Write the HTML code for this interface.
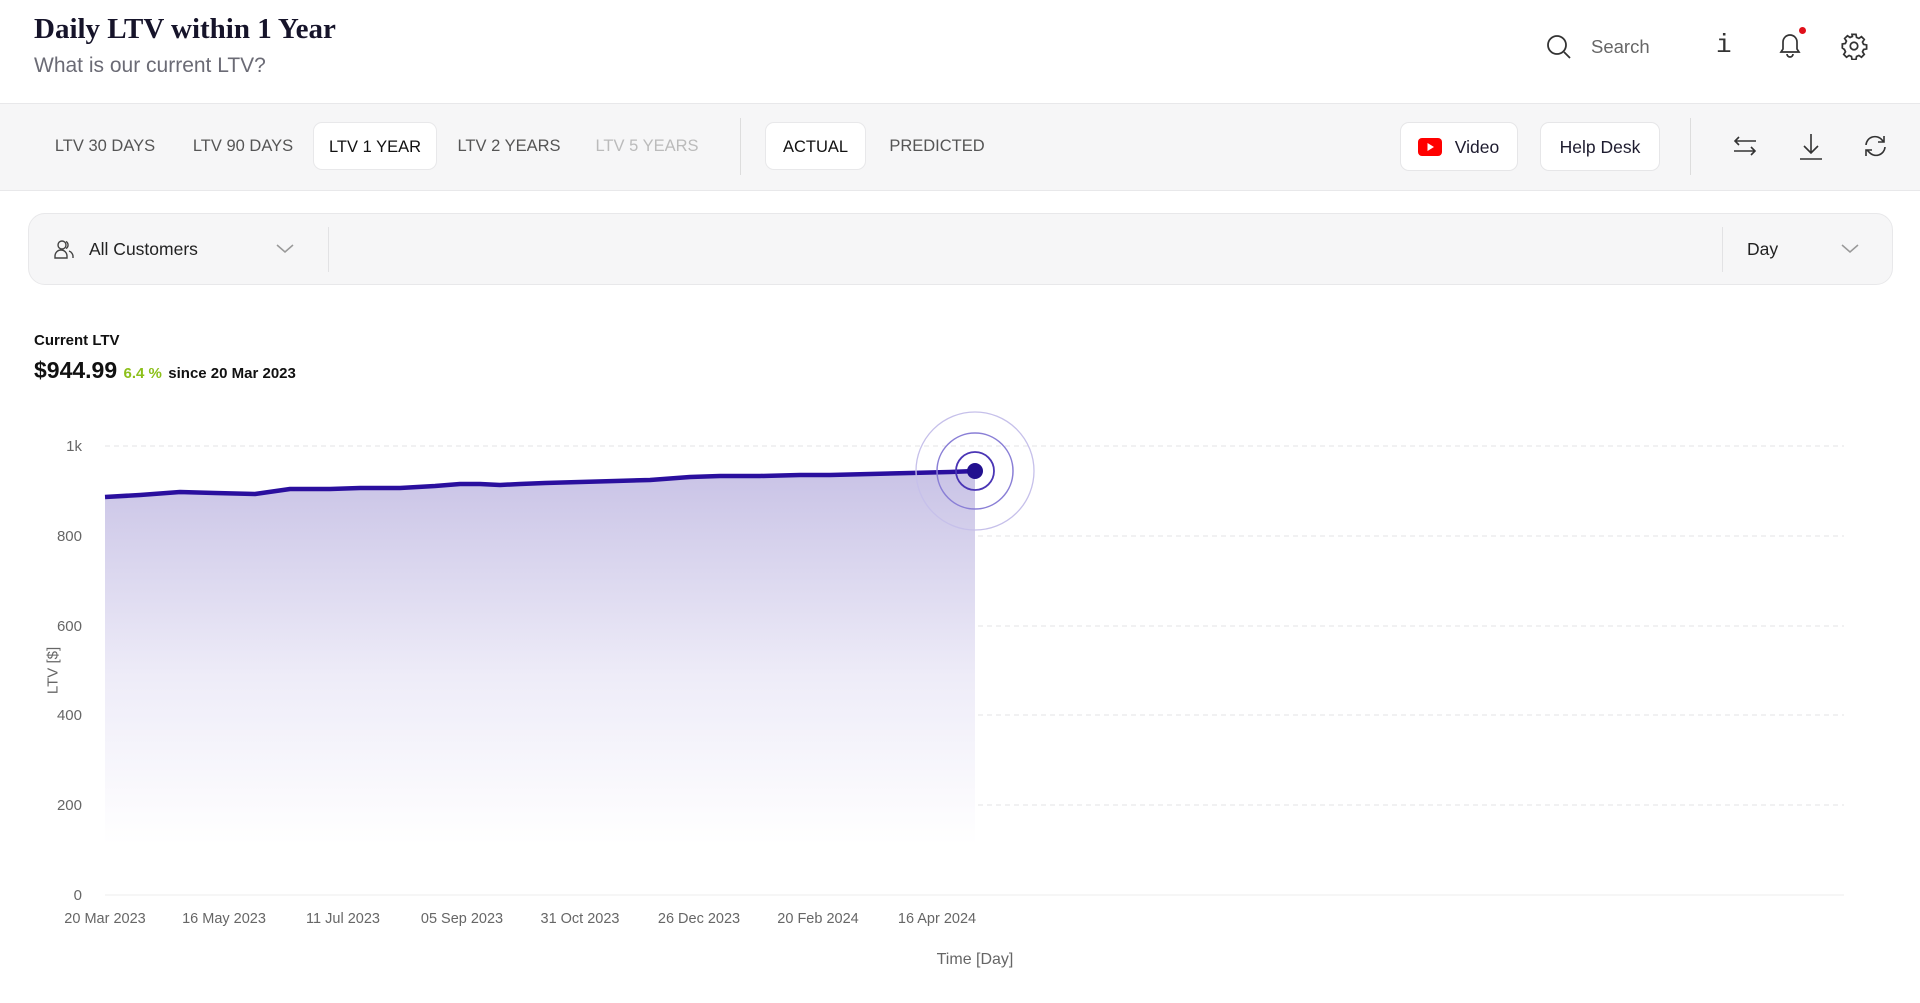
<!DOCTYPE html>
<html><head><meta charset="utf-8"><style>
*{margin:0;padding:0;box-sizing:border-box}
body{width:1920px;height:1003px;background:#fff;font-family:"Liberation Sans",sans-serif;color:#1d1b2e;position:relative;overflow:hidden}
.a{position:absolute;white-space:nowrap}
.tab{position:absolute;top:122px;height:48px;line-height:49px;font-size:16.5px;color:#555;text-align:center}
.btn{position:absolute;top:122px;height:49px;background:#fff;border:1px solid #e6e6e8;border-radius:9px;font-size:17.5px;line-height:48px;color:#1d1b2e;text-align:center}
.yl{position:absolute;right:1838px;font-size:15px;color:#666;text-align:right}
.xl{position:absolute;top:911px;font-size:14.5px;color:#666;transform:translateX(-50%);white-space:nowrap}
</style></head><body>
<div class="a" style="left:34px;top:13px;font-family:'Liberation Serif',serif;font-weight:bold;font-size:29px;color:#16142a">Daily LTV within 1 Year</div>
<div class="a" style="left:34px;top:54px;font-size:21px;color:#6b6b75">What is our current LTV?</div>
<svg class="a" style="left:1545px;top:33px" width="28" height="28" viewBox="0 0 28 28" fill="none" stroke="#333" stroke-width="1.8"><circle cx="12" cy="12" r="9"/><path d="M19 19l6 6"/></svg>
<div class="a" style="left:1591px;top:36px;font-size:18.5px;color:#666">Search</div>
<div class="a" style="left:1716px;top:30px;font-family:'Liberation Mono',monospace;font-size:26px;color:#333">i</div>
<svg class="a" style="left:1775px;top:30px" width="30" height="30" viewBox="0 0 30 30" fill="none" stroke="#333" stroke-width="1.7"><path d="M6 22h18l-2-3v-7a7 7 0 0 0-14 0v7z"/><path d="M12 24a3 3 0 0 0 6 0"/></svg>
<div class="a" style="left:1799px;top:27px;width:7px;height:7px;border-radius:50%;background:#e0101a"></div>
<svg class="a" style="left:1840px;top:32px" width="28" height="28" viewBox="0 0 24 24" fill="none" stroke="#333" stroke-width="1.5"><circle cx="12" cy="12" r="3.2"/><path d="M10.3 2h3.4l.5 2.6 2 .9 2.2-1.5 2.4 2.4-1.5 2.2.9 2 2.6.5v3.4l-2.6.5-.9 2 1.5 2.2-2.4 2.4-2.2-1.5-2 .9-.5 2.6h-3.4l-.5-2.6-2-.9-2.2 1.5-2.4-2.4 1.5-2.2-.9-2L2 13.7v-3.4l2.6-.5.9-2L4 5.6 6.4 3.2l2.2 1.5 2-.9z"/></svg>

<div class="a" style="left:0;top:103px;width:1920px;height:88px;background:#f6f6f7;border-top:1px solid #e8e8ea;border-bottom:1px solid #e8e8ea"></div>
<div class="tab" style="left:45px;width:120px">LTV 30 DAYS</div>
<div class="tab" style="left:183px;width:120px">LTV 90 DAYS</div>
<div class="tab" style="left:313px;width:124px;background:#fff;border:1px solid #e8e8ea;border-radius:9px;color:#111">LTV 1 YEAR</div>
<div class="tab" style="left:449px;width:120px">LTV 2 YEARS</div>
<div class="tab" style="left:587px;width:120px;color:#bbb">LTV 5 YEARS</div>
<div class="a" style="left:740px;top:118px;width:1px;height:57px;background:#ddd"></div>
<div class="tab" style="left:765px;width:101px;background:#fff;border:1px solid #e8e8ea;border-radius:9px;color:#111">ACTUAL</div>
<div class="tab" style="left:882px;width:110px">PREDICTED</div>
<div class="btn" style="left:1400px;width:118px"><svg style="position:absolute;left:17px;top:15px" width="24" height="18" viewBox="0 0 24 18"><rect width="24" height="18" rx="4" fill="#f00"/><path d="M9.5 5v8l6.5-4z" fill="#fff"/></svg><span style="margin-left:36px">Video</span></div>
<div class="btn" style="left:1540px;width:120px">Help Desk</div>
<div class="a" style="left:1690px;top:118px;width:1px;height:57px;background:#ddd"></div>
<svg class="a" style="left:1731px;top:132px" width="28" height="28" viewBox="0 0 28 28" fill="none" stroke="#333" stroke-width="1.6"><path d="M25 9H4M8 5L4 9l4 4M3 19h21M20 15l4 4-4 4"/></svg>
<svg class="a" style="left:1797px;top:131px" width="28" height="30" viewBox="0 0 28 30" fill="none" stroke="#333" stroke-width="1.6"><path d="M14 3v19M7 15l7 7 7-7M3 28h22"/></svg>
<svg class="a" style="left:1861px;top:132px" width="28" height="28" viewBox="0 0 28 28" fill="none" stroke="#333" stroke-width="1.6"><path d="M5 13a9 9 0 0 1 16-5l2 2M24 15a9 9 0 0 1-16 5l-2-2"/><path d="M23 4v6h-6M5 24v-6h6"/></svg>

<div class="a" style="left:28px;top:213px;width:1865px;height:72px;background:#f6f6f7;border:1px solid #e8e8ea;border-radius:17px"></div>
<svg class="a" style="left:53px;top:238px" width="22" height="22" viewBox="0 0 22 22" fill="none" stroke="#444" stroke-width="1.4"><circle cx="9" cy="7" r="4"/><path d="M2 20v-2a6 6 0 0 1 12 0v2zM13 3.5a4 4 0 0 1 0 7M16 13a6 6 0 0 1 4 6v1"/></svg>
<div class="a" style="left:89px;top:239px;font-size:17.5px;color:#222">All Customers</div>
<svg class="a" style="left:276px;top:244px" width="18" height="10" viewBox="0 0 18 10" fill="none" stroke="#999" stroke-width="1.5"><path d="M1 1l8 7 8-7"/></svg>
<div class="a" style="left:328px;top:227px;width:1px;height:45px;background:#e2e2e4"></div>
<div class="a" style="left:1722px;top:227px;width:1px;height:45px;background:#e2e2e4"></div>
<div class="a" style="left:1747px;top:239px;font-size:17.5px;color:#222">Day</div>
<svg class="a" style="left:1841px;top:244px" width="18" height="10" viewBox="0 0 18 10" fill="none" stroke="#999" stroke-width="1.5"><path d="M1 1l8 7 8-7"/></svg>

<div class="a" style="left:34px;top:332px;font-size:15px;font-weight:bold;color:#111">Current LTV</div>
<div class="a" style="left:34px;top:357px;font-size:23px;font-weight:bold;color:#111">$944.99 <span style="font-size:15px;color:#8cc01a;font-weight:bold">6.4 %</span> <span style="font-size:15px;color:#111">since 20 Mar 2023</span></div>

<svg class="a" style="left:0;top:0" width="1920" height="1003">
<defs><linearGradient id="g" x1="0" y1="0" x2="0" y2="1"><stop offset="0" stop-color="#c9c3e6"/><stop offset="0.55" stop-color="#eeecf8"/><stop offset="1" stop-color="#fff"/></linearGradient></defs>
<g stroke="#e3e3e6" stroke-dasharray="5 4" stroke-width="1"><path d="M105 446H1844M105 536H1844M105 626H1844M105 715H1844M105 805H1844"/></g>
<path d="M105 895H1844" stroke="#eee"/>
<path d="M105 497 L140 495 L180 492 L215 493 L255 494 L290 489 L330 489 L360 488 L400 488 L435 486 L460 484 L480 484 L500 485 L520 484 L545 483 L580 482 L615 481 L650 480 L690 477 L720 476 L760 476 L800 475 L830 475 L870 474 L910 473 L950 472 L975 471 L975 845 L105 845Z" fill="url(#g)"/>
<path d="M105 497 L140 495 L180 492 L215 493 L255 494 L290 489 L330 489 L360 488 L400 488 L435 486 L460 484 L480 484 L500 485 L520 484 L545 483 L580 482 L615 481 L650 480 L690 477 L720 476 L760 476 L800 475 L830 475 L870 474 L910 473 L950 472 L975 471" fill="none" stroke="#2a0f9e" stroke-width="4.5" stroke-linejoin="round"/>
<circle cx="975" cy="471" r="59" fill="none" stroke="#c6c0ea" stroke-width="1.3"/>
<circle cx="975" cy="471" r="38" fill="none" stroke="#8a7fd6" stroke-width="1.5"/>
<circle cx="975" cy="471" r="19" fill="none" stroke="#4a35b5" stroke-width="1.8"/>
<circle cx="975" cy="471" r="8" fill="#22108f"/>
</svg>
<div class="yl" style="top:438px">1k</div>
<div class="yl" style="top:528px">800</div>
<div class="yl" style="top:618px">600</div>
<div class="yl" style="top:707px">400</div>
<div class="yl" style="top:797px">200</div>
<div class="yl" style="top:887px">0</div>
<div class="a" style="left:28px;top:662px;font-size:15px;color:#666;transform:rotate(-90deg);transform-origin:center;width:50px;text-align:center">LTV [$]</div>
<div class="xl" style="left:105px">20 Mar 2023</div>
<div class="xl" style="left:224px">16 May 2023</div>
<div class="xl" style="left:343px">11 Jul 2023</div>
<div class="xl" style="left:462px">05 Sep 2023</div>
<div class="xl" style="left:580px">31 Oct 2023</div>
<div class="xl" style="left:699px">26 Dec 2023</div>
<div class="xl" style="left:818px">20 Feb 2024</div>
<div class="xl" style="left:937px">16 Apr 2024</div>
<div class="xl" style="left:975px;top:951px;font-size:16px">Time [Day]</div>
</body></html>
